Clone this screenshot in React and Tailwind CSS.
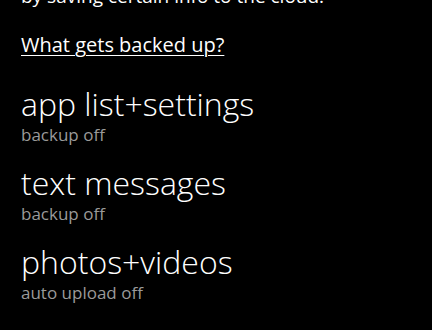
import React from "react";

const ITEMS = [
  { title: "app list+settings", status: "backup off" },
  { title: "text messages", status: "backup off" },
  { title: "photos+videos", status: "auto upload off" },
];

const FONT = { fontFamily: '"Open Sans", "Noto Sans", sans-serif' };

export default function App() {
  return (
    <div className="w-[432px] h-[330px] overflow-hidden bg-black text-white" style={FONT}>
      <div className="pl-[21px] -mt-[17px]">
        <p className="text-[19px] leading-[26px] text-white">by saving certain info to the cloud.</p>
        <a className="block mt-[24px] text-[20px] leading-[24px] underline underline-offset-[3px] decoration-1">
          What gets backed up?
        </a>
        <div className="mt-[28px] flex flex-col gap-[18px]">
          {ITEMS.map((item) => (
            <div key={item.title} className="flex flex-col">
              <span className="text-[32px] leading-[38px] font-light">{item.title}</span>
              <span className="mt-[1px] text-[17px] leading-[22px] text-[#9a9a9a]">{item.status}</span>
            </div>
          ))}
        </div>
      </div>
    </div>
  );
}
